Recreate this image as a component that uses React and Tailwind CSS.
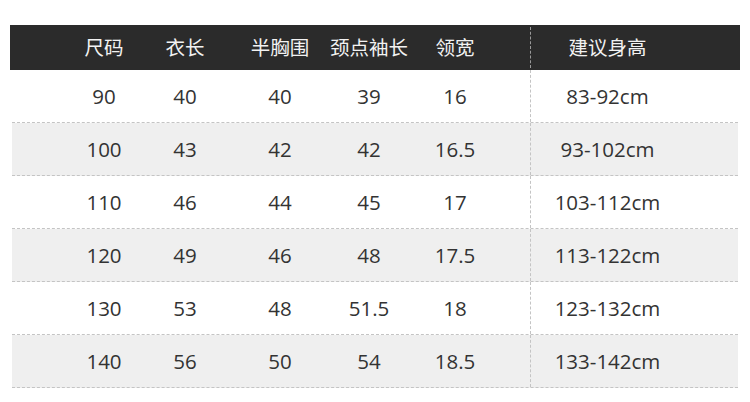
import React from "react";

const rows = [
  ["90", "40", "40", "39", "16", "83-92cm"],
  ["100", "43", "42", "42", "16.5", "93-102cm"],
  ["110", "46", "44", "45", "17", "103-112cm"],
  ["120", "49", "46", "48", "17.5", "113-122cm"],
  ["130", "53", "48", "51.5", "18", "123-132cm"],
  ["140", "56", "50", "54", "18.5", "133-142cm"],
];

const headers = ["尺码", "衣长", "半胸围", "颈点袖长", "领宽", "建议身高"];

// widths of the left five columns, tuned to the text centres
const colCls = [
  "w-[80px] text-center",
  "w-[82px] text-center",
  "w-[108px] text-center",
  "w-[70px] text-center",
  "w-[126px] pr-[24px] text-center",
];

export default function App() {
  return (
    <div
      className="w-[750px] h-[402px] bg-white pt-[25px]"
      style={{ fontFamily: '"Open Sans", "Noto Sans CJK SC", sans-serif' }}
    >
      <div className="mx-[10px] h-[45px] bg-[#2b2b2b] flex items-center text-[#f2f2f2] text-[19.5px] whitespace-nowrap">
        <div className="w-[54px]" />
        {headers.slice(0, 5).map((h, i) => (
          <div key={h} className={colCls[i] + " flex justify-center"}>
            {h}
          </div>
        ))}
        <div className="self-stretch py-[2px] flex">
          <div className="border-l border-dashed border-[#9a9a9a]" />
        </div>
        <div className="w-[153px] text-center">{headers[5]}</div>
      </div>

      <div className="mx-[12px] text-[20.5px] text-[#333333]">
        {rows.map((r, idx) => (
          <div
            key={r[0]}
            className={
              "h-[53px] flex items-stretch border-b border-dashed border-[#c4c4c4] " +
              (idx % 2 === 1 ? "bg-[#efefef]" : "bg-white")
            }
          >
            <div className="w-[52px]" />
            {r.slice(0, 5).map((v, i) => (
              <div key={i} className={colCls[i] + " flex items-center justify-center pt-[1px]"}>
                {v}
              </div>
            ))}
            <div className="w-[154px] border-l border-dashed border-[#c4c4c4] flex items-center justify-center pt-[1px]">
              {r[5]}
            </div>
          </div>
        ))}
      </div>
    </div>
  );
}
